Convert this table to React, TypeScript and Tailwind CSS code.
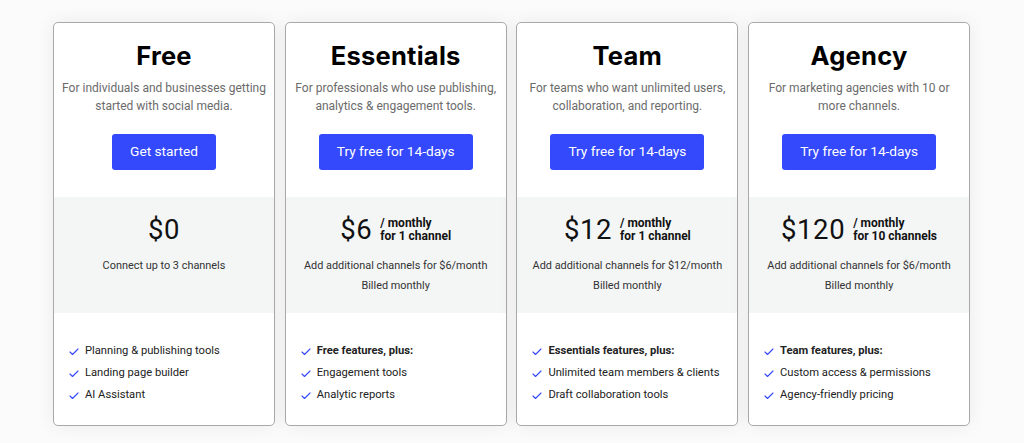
import React from "react";
import { Check } from "lucide-react";

type Plan = {
  name: string;
  desc: string[];
  cta: string;
  price: string;
  per?: string[];
  notes: string[];
  features: { text: string; bold?: boolean }[];
};

const plans: Plan[] = [
  {
    name: "Free",
    desc: ["For individuals and businesses getting", "started with social media."],
    cta: "Get started",
    price: "$0",
    notes: ["Connect up to 3 channels"],
    features: [
      { text: "Planning & publishing tools" },
      { text: "Landing page builder" },
      { text: "AI Assistant" },
    ],
  },
  {
    name: "Essentials",
    desc: ["For professionals who use publishing,", "analytics & engagement tools."],
    cta: "Try free for 14-days",
    price: "$6",
    per: ["/ monthly", "for 1 channel"],
    notes: ["Add additional channels for $6/month", "Billed monthly"],
    features: [
      { text: "Free features, plus:", bold: true },
      { text: "Engagement tools" },
      { text: "Analytic reports" },
    ],
  },
  {
    name: "Team",
    desc: ["For teams who want unlimited users,", "collaboration, and reporting."],
    cta: "Try free for 14-days",
    price: "$12",
    per: ["/ monthly", "for 1 channel"],
    notes: ["Add additional channels for $12/month", "Billed monthly"],
    features: [
      { text: "Essentials features, plus:", bold: true },
      { text: "Unlimited team members & clients" },
      { text: "Draft collaboration tools" },
    ],
  },
  {
    name: "Agency",
    desc: ["For marketing agencies with 10 or", "more channels."],
    cta: "Try free for 14-days",
    price: "$120",
    per: ["/ monthly", "for 10 channels"],
    notes: ["Add additional channels for $6/month", "Billed monthly"],
    features: [
      { text: "Team features, plus:", bold: true },
      { text: "Custom access & permissions" },
      { text: "Agency-friendly pricing" },
    ],
  },
];

function PlanCard({ plan }: { plan: Plan }) {
  return (
    <div className="w-[222px] h-[404px] flex flex-col rounded-[5px] border border-[#a9a9a9] bg-white shadow-[0_0_18px_rgba(0,0,0,0.07)] overflow-hidden">
      {/* Header */}
      <div className="flex flex-col items-center pt-[17px] px-2">
        <h2 className="text-[25.5px] leading-[32px] font-bold text-black font-['Inter',sans-serif] tracking-[0.01em]">
          {plan.name}
        </h2>
        <p className="mt-[7px] text-[12px] leading-[18px] text-[#6b6b6b] text-center">
          {plan.desc.map((d) => (
            <span key={d} className="block whitespace-nowrap">{d}</span>
          ))}
        </p>
        <button className="mt-[19px] h-9 px-[18px] rounded-[3px] bg-[#3349fb] text-white text-[13.7px] leading-none">
          {plan.cta}
        </button>
      </div>

      {/* Price */}
      <div className="mt-[27px] h-[116px] bg-[#f4f6f6] flex flex-col items-center pt-[15px]">
        <div className="h-9 flex items-center gap-[8px]">
          <span className="text-[27.5px] leading-9 text-[#111] tracking-[0.02em]">{plan.price}</span>
          {plan.per && (
            <span className="text-[12px] leading-[13px] font-bold text-[#111]">
              {plan.per.map((p) => (
                <span key={p} className="block whitespace-nowrap">{p}</span>
              ))}
            </span>
          )}
        </div>
        <div className="mt-[8px] text-[10.9px] leading-5 text-[#333] text-center">
          {plan.notes.map((n) => (
            <div key={n} className="whitespace-nowrap">{n}</div>
          ))}
        </div>
      </div>

      {/* Features */}
      <ul className="pt-[27px] pl-[14px] flex flex-col">
        {plan.features.map((f) => (
          <li key={f.text} className="h-[22px] flex items-center gap-[5px]">
            <Check size={12} strokeWidth={2.2} className="text-[#3349fb] shrink-0 mt-[2px]" />
            <span className={`text-[11.2px] text-[#222] whitespace-nowrap ${f.bold ? "font-bold" : ""}`}>
              {f.text}
            </span>
          </li>
        ))}
      </ul>
    </div>
  );
}

export default function App() {
  return (
    <div className="w-[1024px] h-[443px] bg-[#fbfbfb] font-['Roboto',sans-serif] pt-[22px]">
      <div className="flex gap-[9.7px] pl-[53px]">
        {plans.map((p) => (
          <PlanCard key={p.name} plan={p} />
        ))}
      </div>
    </div>
  );
}
